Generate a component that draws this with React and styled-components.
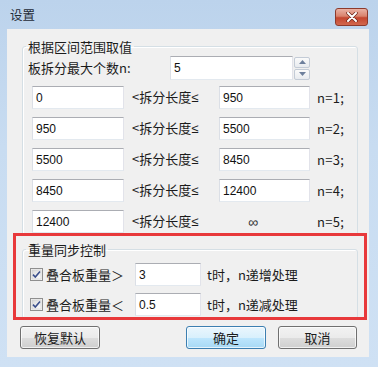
import React from "react";
import styled, { createGlobalStyle } from "styled-components";

const GlobalStyle = createGlobalStyle`
  html, body { margin: 0; padding: 0; }
  body {
    font-family: "Noto Sans CJK SC", "Liberation Sans", sans-serif;
    font-size: 13px;
    color: #1b1b1b;
  }
`;

const Window = styled.div`
  width: 378px;
  height: 367px;
  display: flex;
  flex-direction: column;
  background: linear-gradient(180deg, #bcd3ec 0%, #c8dcf1 40%, #cfe1f4 100%);
  overflow: hidden;
`;

const TitleBar = styled.div`
  height: 29px;
  display: flex;
  justify-content: space-between;
  align-items: flex-start;
  padding: 0 10px 0 10px;
  box-sizing: border-box;
`;

const Title = styled.div`
  margin-top: 7px;
  font-size: 12.5px;
  line-height: 16px;
  color: #1f2a36;
`;

const CloseButton = styled.div`
  margin-top: 8px;
  width: 33px;
  height: 18px;
  box-sizing: border-box;
  border: 1px solid #8d3a2c;
  border-radius: 3px;
  background: linear-gradient(180deg, #eab2a4 0%, #d9826c 45%, #c4462f 55%, #d2684e 100%);
  display: flex;
  align-items: center;
  justify-content: center;
`;

const Frame = styled.div`
  flex: 1;
  display: flex;
  padding: 0 9px 10px 7px;
`;

const Client = styled.div`
  position: relative;
  flex: 1;
  display: flex;
  flex-direction: column;
  background: #f0f0f0;
`;

const Group = styled.fieldset`
  margin: ${({ $top }) => $top}px 0 0 15px;
  padding: 0;
  width: 336px;
  box-sizing: border-box;
  border: 1px solid #d5dfe5;
  border-radius: 3px;
  box-shadow: inset 1px 1px 0 #fff;
  min-inline-size: 0;
`;

const Legend = styled.legend`
  margin-left: 3px;
  padding: 0 2px;
  font-size: 13px;
  line-height: 15px;
  color: #1b1b1b;
`;

const GroupBody = styled.div`
  display: flex;
  flex-direction: column;
  padding: ${({ $pad }) => $pad};
`;

const CountRow = styled.div`
  display: flex;
  align-items: center;
  height: 24px;
`;

const CountLabel = styled.div`
  width: 142px;
  line-height: 16px;
`;

const Field = styled.div`
  width: ${({ $w }) => $w}px;
  height: ${({ $h }) => $h || 23}px;
  box-sizing: border-box;
  background: #fff;
  border: 1px solid;
  border-color: #abadb3 #e2e3ea #e3e9ef #dbdfe6;
  padding-left: 3px;
  display: flex;
  align-items: center;
  font-family: "Liberation Sans", "Noto Sans CJK SC", sans-serif;
  font-size: 12px;
  color: #111;
`;

const SpinButtons = styled.div`
  display: flex;
  flex-direction: column;
  gap: 1px;
  margin-left: 1px;
`;

const SpinBtn = styled.div`
  width: 16px;
  height: 11px;
  box-sizing: border-box;
  border: 1px solid #c3cbd6;
  border-radius: 2px;
  background: linear-gradient(180deg, #fafafa 0%, #e8ebef 100%);
  display: flex;
  align-items: center;
  justify-content: center;
`;

const RangeList = styled.div`
  display: flex;
  flex-direction: column;
  gap: 8px;
  margin-top: 6px;
  padding-left: 4px;
`;

const RangeRow = styled.div`
  display: flex;
  align-items: center;
  height: 23px;
`;

const RangeLabel = styled.div`
  width: 87px;
  margin-left: 8px;
  line-height: 16px;
`;

const Sym = styled.span`
  font-family: "Liberation Sans", sans-serif;
  font-size: 13px;
`;

const InfinityMark = styled.div`
  width: 91px;
  padding-left: 29px;
  box-sizing: border-box;
  font-family: "Liberation Sans", sans-serif;
  font-size: 14px;
  color: #333;
`;

const NLabel = styled.div`
  margin-left: 7px;
  line-height: 16px;
  letter-spacing: 0.3px;
`;

const CheckRows = styled.div`
  display: flex;
  flex-direction: column;
  gap: 7px;
  margin-top: 6px;
`;

const CheckRow = styled.div`
  display: flex;
  align-items: center;
  height: 23px;
`;

const CheckLabel = styled.div`
  width: 89px;
  margin-left: 3px;
  line-height: 16px;
`;

const Suffix = styled.div`
  margin-left: 6px;
  line-height: 16px;
`;

const ButtonRow = styled.div`
  display: flex;
  margin-top: 7px;
  padding: 0 12px 0 13px;
`;

const Button = styled.div`
  width: ${({ $w }) => $w || 80}px;
  height: 23px;
  box-sizing: border-box;
  margin-left: ${({ $ml }) => $ml || 0};
  border: 1px solid ${({ $primary }) => ($primary ? "#3c7fb1" : "#707070")};
  border-radius: 3px;
  background: ${({ $primary }) =>
    $primary
      ? "linear-gradient(180deg, #eaf6fd 0%, #d9f0fc 50%, #bee6fd 51%, #a7d9f5 100%)"
      : "linear-gradient(180deg, #f2f2f2 0%, #ebebeb 50%, #dddddd 51%, #cfcfcf 100%)"};
  box-shadow: inset 0 0 0 1px rgba(255, 255, 255, 0.7);
  display: flex;
  align-items: center;
  justify-content: center;
  font-size: 13px;
  line-height: 16px;
`;

const Highlight = styled.div`
  position: absolute;
  left: 6px;
  top: 204px;
  width: 354px;
  height: 87px;
  box-sizing: border-box;
  border: 3px solid #e8393b;
  pointer-events: none;
`;

const Tri = ({ up }) => (
  <svg width="7" height="4" viewBox="0 0 7 4">
    <path d={up ? "M0 4 L3.5 0 L7 4 Z" : "M0 0 L3.5 4 L7 0 Z"} fill="#6d7f9c" />
  </svg>
);

const CheckBox = () => (
  <svg width="13" height="13" viewBox="0 0 13 13">
    <defs>
      <linearGradient id="cbg" x1="0" y1="0" x2="1" y2="1">
        <stop offset="0" stopColor="#d8d8d8" />
        <stop offset="1" stopColor="#ffffff" />
      </linearGradient>
    </defs>
    <rect x="0.5" y="0.5" width="12" height="12" fill="#f4f4f4" stroke="#8f8f8f" />
    <rect x="2" y="2" width="9" height="9" fill="url(#cbg)" stroke="#c9c9c9" strokeWidth="0.6" />
    <path d="M3 6.6 L5.3 9 L10 3.4" fill="none" stroke="#3b4f8c" strokeWidth="1.6" />
  </svg>
);

const ranges = [
  { lo: "0", hi: "950", n: 1 },
  { lo: "950", hi: "5500", n: 2 },
  { lo: "5500", hi: "8450", n: 3 },
  { lo: "8450", hi: "12400", n: 4 },
  { lo: "12400", hi: null, n: 5 },
];

const checks = [
  { label: "叠合板重量＞", value: "3", suffix: "t时，n递增处理" },
  { label: "叠合板重量＜", value: "0.5", suffix: "t时，n递减处理" },
];

export default function App() {
  return (
    <>
      <GlobalStyle />
      <Window>
        <TitleBar>
          <Title>设置</Title>
          <CloseButton>
            <svg width="12" height="10" viewBox="0 0 12 10">
              <path d="M2 1 L10 9 M10 1 L2 9" stroke="#6b2418" strokeWidth="3.4" strokeLinecap="round" />
              <path d="M2 1 L10 9 M10 1 L2 9" stroke="#ffffff" strokeWidth="2" strokeLinecap="round" />
            </svg>
          </CloseButton>
        </TitleBar>
        <Frame>
          <Client>
            <Group $top={10}>
              <Legend>根据区间范围取值</Legend>
              <GroupBody $pad="2px 0 2px 5px">
                <CountRow>
                  <CountLabel>板拆分最大个数n:</CountLabel>
                  <Field $w={123} $h={24}>5</Field>
                  <SpinButtons>
                    <SpinBtn><Tri up /></SpinBtn>
                    <SpinBtn><Tri /></SpinBtn>
                  </SpinButtons>
                </CountRow>
                <RangeList>
                  {ranges.map((r) => (
                    <RangeRow key={r.n}>
                      <Field $w={92}>{r.lo}</Field>
                      <RangeLabel>&lt;拆分长度<Sym>≤</Sym></RangeLabel>
                      {r.hi ? <Field $w={91}>{r.hi}</Field> : <InfinityMark>∞</InfinityMark>}
                      <NLabel>n={r.n};</NLabel>
                    </RangeRow>
                  ))}
                </RangeList>
              </GroupBody>
            </Group>
            <Group $top={6}>
              <Legend>重量同步控制</Legend>
              <GroupBody $pad="0 0 2px 7px">
                <CheckRows>
                  {checks.map((c) => (
                    <CheckRow key={c.label}>
                      <CheckBox />
                      <CheckLabel>{c.label}</CheckLabel>
                      <Field $w={66}>{c.value}</Field>
                      <Suffix>{c.suffix}</Suffix>
                    </CheckRow>
                  ))}
                </CheckRows>
              </GroupBody>
            </Group>
            <ButtonRow>
              <Button>恢复默认</Button>
              <Button $primary $ml="auto">确定</Button>
              <Button $w={79} $ml="12px">取消</Button>
            </ButtonRow>
            <Highlight />
          </Client>
        </Frame>
      </Window>
    </>
  );
}
